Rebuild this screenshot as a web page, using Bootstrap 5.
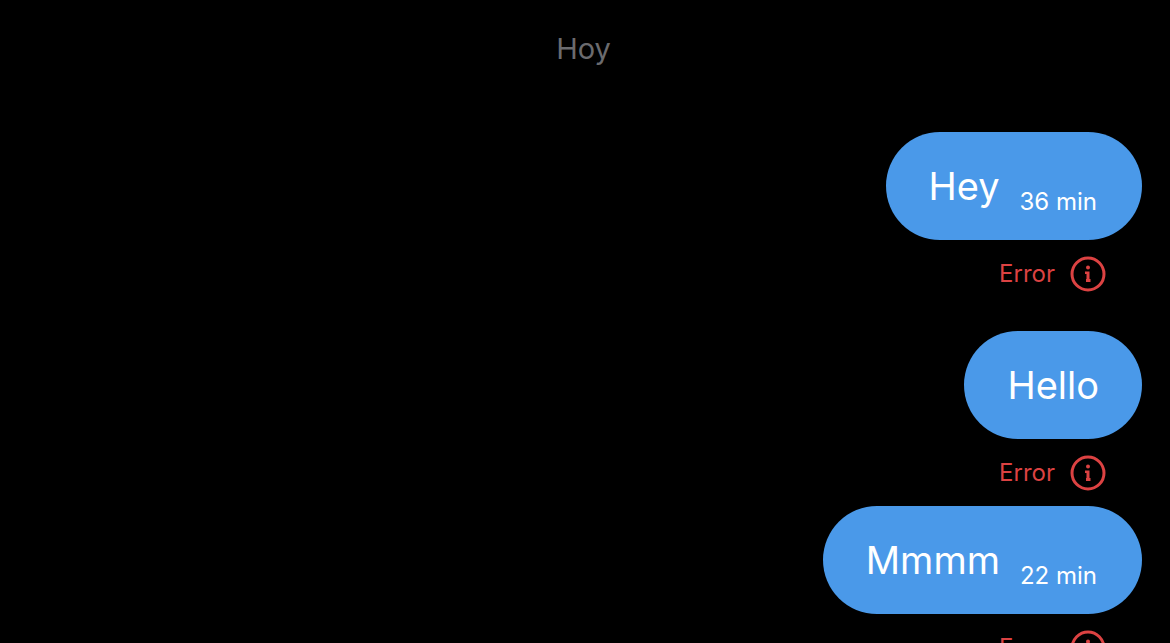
<!DOCTYPE html>
<html lang="es">
<head>
<meta charset="utf-8">
<meta name="viewport" content="width=device-width, initial-scale=1">
<title>Mensajes</title>
<link href="https://cdn.jsdelivr.net/npm/bootstrap@5.3.0/dist/css/bootstrap.min.css" rel="stylesheet">
<style>
body{background:#000;font-family:Inter,"Liberation Sans",sans-serif;font-weight:400}
.chat{height:100vh;overflow:hidden;padding:0 28px}
.day{color:#6b6b6e;font-size:29px;line-height:36px;padding:31px 3px 65px 0}
.bubble{background:#4a99e9;color:#fff;height:108px;border-radius:54px;padding:0 43px}
.words{font-size:38px;line-height:48px}
.time{font-size:24px;line-height:28px;margin:32px 2px 0 20px}
.fail{color:#dc4242;font-size:24px;line-height:36px;height:36px;margin:16px 36px 0 0;gap:15px}
.gap-after{margin-bottom:39px}
.tight{margin-bottom:15px}
.fail button{width:36px;height:36px;color:inherit}
</style>
</head>
<body>
<main class="chat d-flex flex-column align-items-end">
<div class="day w-100 text-center flex-shrink-0">Hoy</div>
<div class="bubble d-flex align-items-center flex-shrink-0"><span class="words">Hey</span><span class="time">36 min</span></div>
<div class="fail gap-after d-flex align-items-center flex-shrink-0"><span>Error</span><button class="btn p-0 border-0 d-flex" type="button" aria-label="Info"><svg width="36" height="36" viewBox="0 0 36 36" fill="none"><circle cx="18" cy="18" r="16" stroke="currentColor" stroke-width="3"/><path d="M15 15.5h4.5v7.5h1v3h-4.500v-3h.5v-5H15z" fill="currentColor"/><circle cx="18" cy="11.500" r="2" fill="currentColor"/></svg></button></div>
<div class="bubble d-flex align-items-center flex-shrink-0"><span class="words">Hello</span></div>
<div class="fail tight d-flex align-items-center flex-shrink-0"><span>Error</span><button class="btn p-0 border-0 d-flex" type="button" aria-label="Info"><svg width="36" height="36" viewBox="0 0 36 36" fill="none"><circle cx="18" cy="18" r="16" stroke="currentColor" stroke-width="3"/><path d="M15 15.5h4.5v7.5h1v3h-4.500v-3h.5v-5H15z" fill="currentColor"/><circle cx="18" cy="11.500" r="2" fill="currentColor"/></svg></button></div>
<div class="bubble d-flex align-items-center flex-shrink-0"><span class="words">Mmmm</span><span class="time">22 min</span></div>
<div class="fail d-flex align-items-center flex-shrink-0"><span>Error</span><button class="btn p-0 border-0 d-flex" type="button" aria-label="Info"><svg width="36" height="36" viewBox="0 0 36 36" fill="none"><circle cx="18" cy="18" r="16" stroke="currentColor" stroke-width="3"/><path d="M15 15.5h4.5v7.5h1v3h-4.500v-3h.5v-5H15z" fill="currentColor"/><circle cx="18" cy="11.500" r="2" fill="currentColor"/></svg></button></div>
</main>
<script src="https://cdn.jsdelivr.net/npm/bootstrap@5.3.0/dist/js/bootstrap.bundle.min.js"></script>
</body>
</html>
